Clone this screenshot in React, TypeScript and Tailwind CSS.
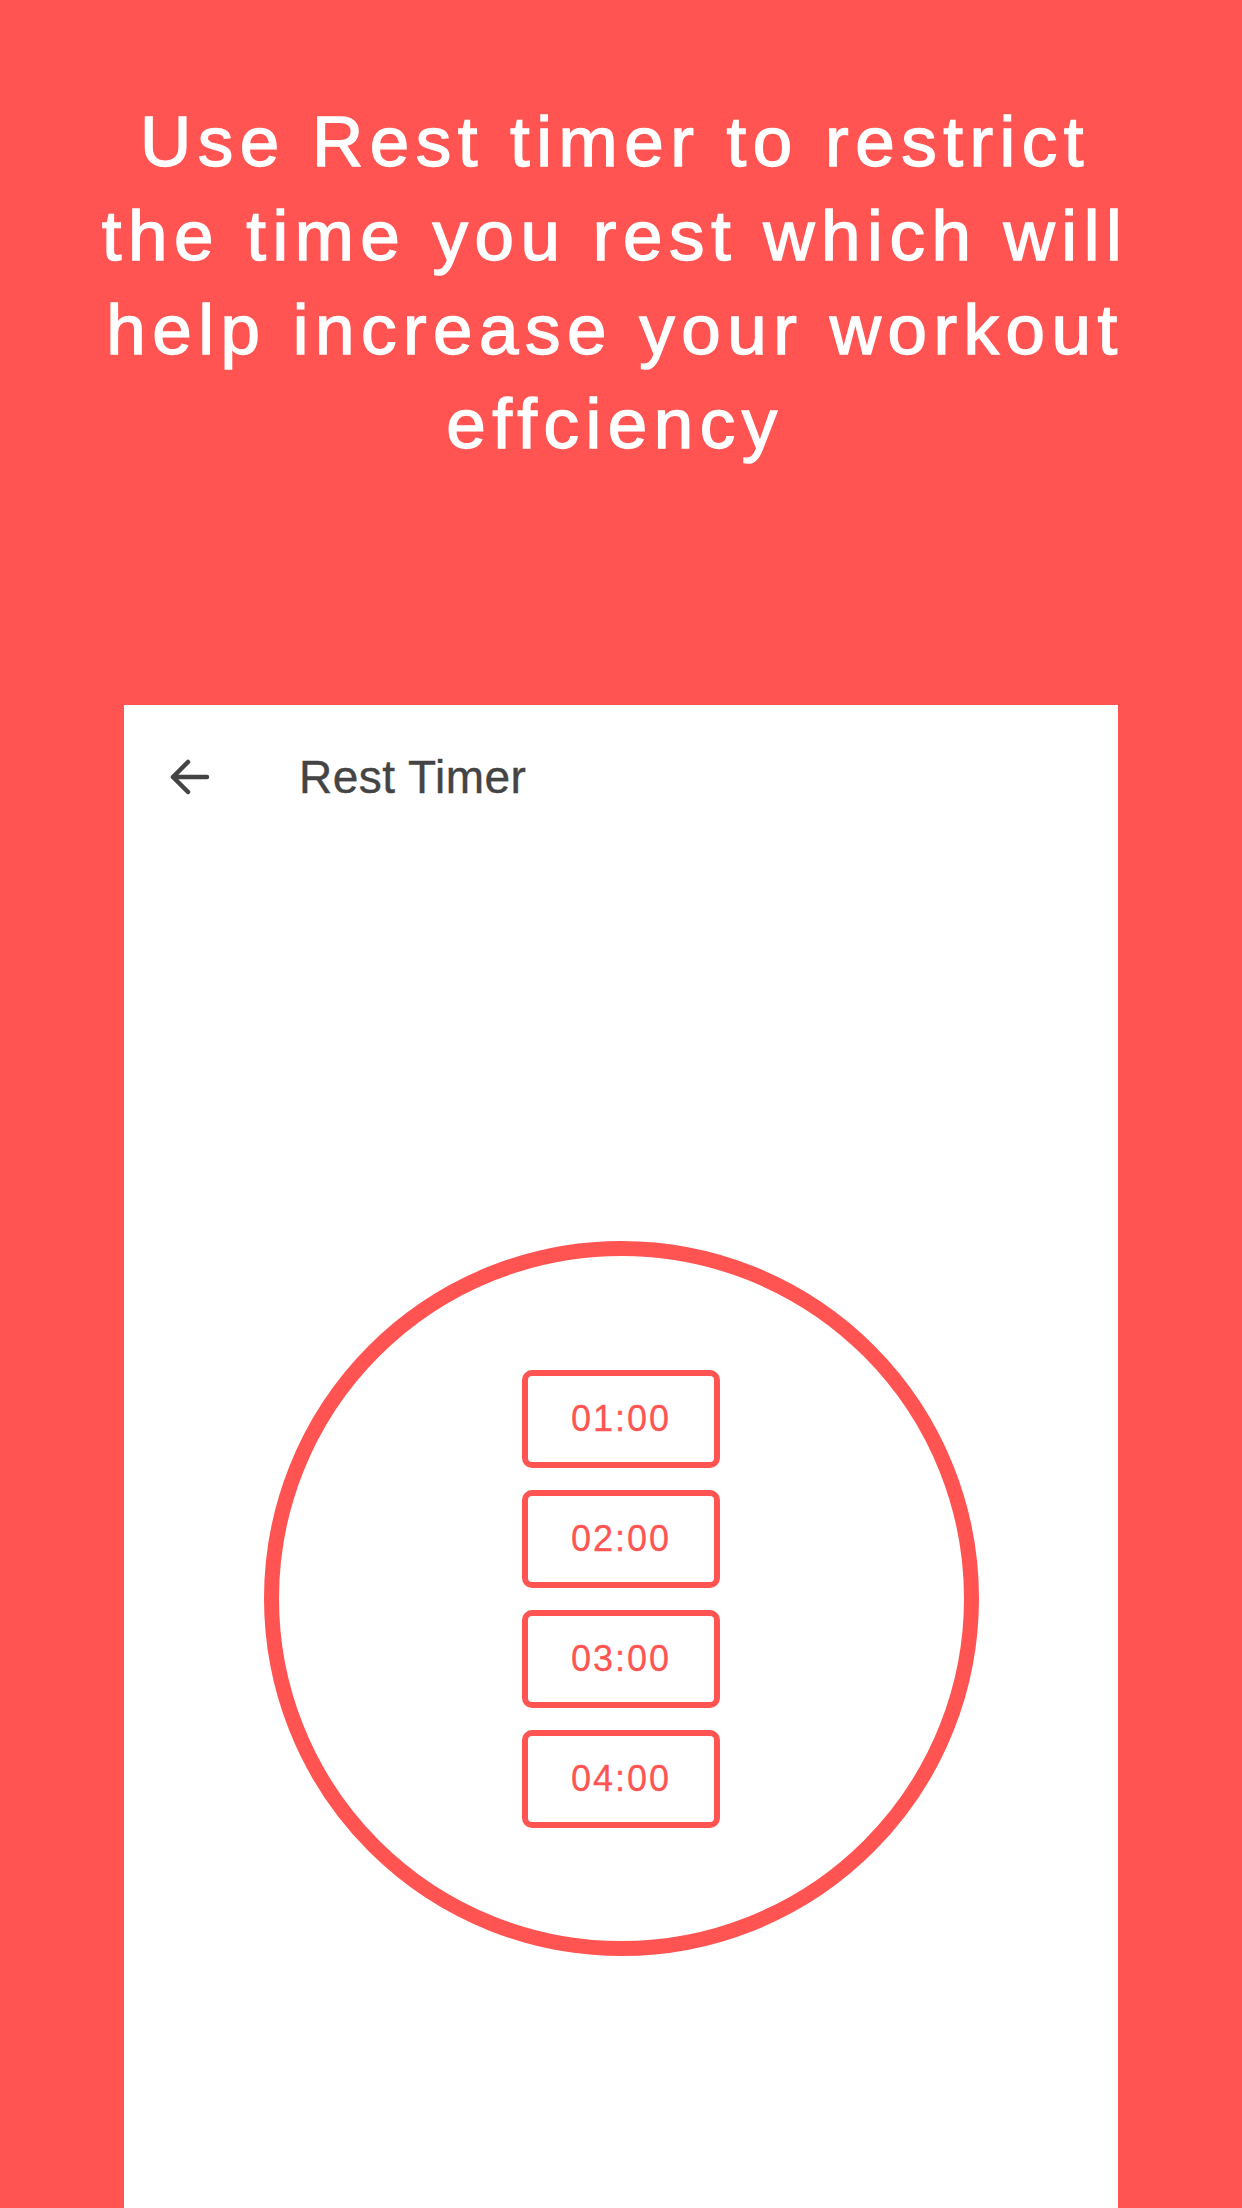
import type { ReactNode } from "react";

const presets = ["01:00", "02:00", "03:00", "04:00"];

function BackArrow() {
  return (
    <svg width="40" height="36" viewBox="0 0 40 36" fill="none" className="block">
      <path
        d="M18 3 L3 18 L18 33 M3 18 H37"
        stroke="#444444"
        strokeWidth="4.5"
        strokeLinecap="round"
        strokeLinejoin="round"
      />
    </svg>
  );
}

function PresetButton({ children }: { children: ReactNode }) {
  return (
    <button className="flex h-[98px] items-center justify-center rounded-[10px] border-[6px] border-[#ff5452] bg-white px-[43px] text-[36px] tracking-[2px] text-[#ff5452] [-webkit-text-stroke:0.3px_#ff5452]">
      {children}
    </button>
  );
}

export default function App() {
  return (
    <div
      className="flex min-h-[2208px] w-full flex-col bg-[#ff5452]"
      style={{ fontFamily: '"Liberation Sans", Arial, sans-serif' }}
    >
      <h1 className="pt-[95px] pr-[12px] text-center text-[71px] font-normal leading-[94px] tracking-[6.5px] text-white [-webkit-text-stroke:1.4px_white]">
        <span className="block whitespace-nowrap">Use Rest timer to restrict</span>
        <span className="block whitespace-nowrap">the time you rest which will</span>
        <span className="block whitespace-nowrap">help increase your workout</span>
        <span className="block whitespace-nowrap">effciency</span>
      </h1>

      <section className="mx-[124px] mt-[234px] flex-1 bg-white pt-[50px]">
        <div className="flex h-[44px] items-center">
          <span className="ml-[46px]">
            <BackArrow />
          </span>
          <h2 className="ml-[89px] text-[46px] leading-[44px] tracking-[0.5px] text-[#444444] [-webkit-text-stroke:0.4px_#444444]">
            Rest Timer
          </h2>
        </div>

        <div className="mx-auto mt-[442px] flex h-[715px] w-[715px] flex-col items-center justify-center gap-[22px] rounded-full border-[15px] border-[#ff5452]">
          {presets.map((p) => (
            <PresetButton key={p}>{p}</PresetButton>
          ))}
        </div>
      </section>
    </div>
  );
}
